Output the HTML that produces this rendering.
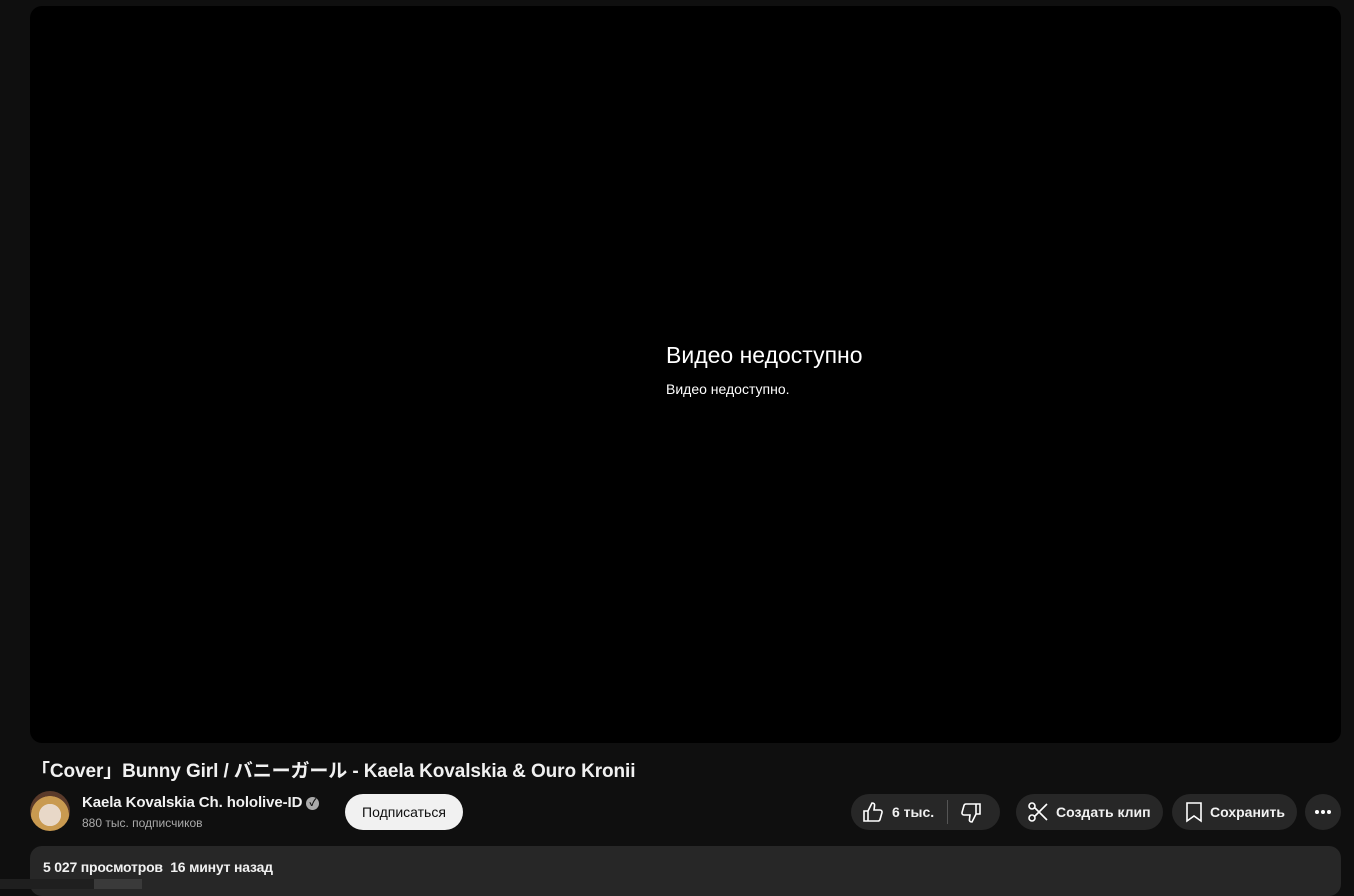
<!DOCTYPE html><html><head><meta charset="utf-8"><style>
body{margin:0;width:1354px;height:886px;background:#0f0f0f;overflow:hidden;font-family:"Liberation Sans","Noto Sans CJK JP",sans-serif;color:#f1f1f1;position:relative}
.a{position:absolute}
.btn{position:absolute;background:#272727;border-radius:18px;height:36px;top:794px;display:flex;align-items:center;font-size:14px;font-weight:bold}
</style></head><body>
<div class="a" style="left:30px;top:6px;width:1311px;height:737px;background:#000;border-radius:12px"></div>
<div class="a" style="left:666px;top:342px;font-size:23px;color:#fff">Видео недоступно</div>
<div class="a" style="left:666px;top:381px;font-size:14px;color:#fff">Видео недоступно.</div>
<div class="a" style="left:31px;top:756px;font-size:19px;letter-spacing:-0.1px;font-weight:bold;white-space:nowrap">「Cover」Bunny Girl / バニーガール - Kaela Kovalskia &amp; Ouro Kronii</div>
<div class="a" style="left:30px;top:791px;width:40px;height:40px;border-radius:50%;background:radial-gradient(circle at 50% 60%,#e8d8c8 0 35%,#c99a50 36% 60%,#5a3a2a 61%)"></div>
<div class="a" style="left:82px;top:794px;font-size:15px;letter-spacing:-0.1px;font-weight:bold;white-space:nowrap">Kaela Kovalskia Ch. hololive-ID <span style="display:inline-block;width:13px;height:13px;border-radius:50%;background:#aaa;color:#0f0f0f;font-size:10px;text-align:center;line-height:13px;vertical-align:1px">✓</span></div>
<div class="a" style="left:82px;top:816px;font-size:12px;color:#aaa">880 тыс. подписчиков</div>
<div class="btn" style="left:345px;width:118px;background:#f1f1f1;color:#0f0f0f;justify-content:center;font-weight:normal">Подписаться</div>
<div class="btn" style="left:851px;width:149px">
<svg class="a" style="left:10px;top:6px" width="24" height="24" viewBox="0 0 24 24" fill="none" stroke="#fff" stroke-width="1.6"><path d="M3 11h4v10H3zM7 11l4-8c2 0 3 1 2.5 3L13 10h6c1.5 0 2.3 1.3 2 2.5l-2 7c-.3 1-1 1.5-2 1.5H7"/></svg>
<span class="a" style="left:41px;top:10px">6 тыс.</span>
<div class="a" style="left:96px;top:6px;width:1px;height:24px;background:#555"></div>
<svg class="a" style="left:108px;top:7px" width="24" height="24" viewBox="0 0 24 24" fill="none" stroke="#fff" stroke-width="1.6"><path d="M17 3h4v10h-4zM17 13l-4 8c-2 0-3-1-2.5-3L11 14H5c-1.5 0-2.3-1.3-2-2.5l2-7C5.3 3.5 6 3 7 3h10"/></svg>
</div>
<div class="btn" style="left:1016px;width:147px">
<svg class="a" style="left:10px;top:6px" width="24" height="24" viewBox="0 0 24 24" fill="none" stroke="#fff" stroke-width="1.6"><circle cx="6" cy="6" r="3"/><circle cx="6" cy="18" r="3"/><path d="M8.5 7.5L21 20M8.5 16.5L21 4"/></svg>
<span class="a" style="left:40px;top:10px">Создать клип</span></div>
<div class="btn" style="left:1172px;width:125px">
<svg class="a" style="left:10px;top:6px" width="24" height="24" viewBox="0 0 24 24" fill="none" stroke="#fff" stroke-width="1.6"><path d="M5 3h14v18l-7-5-7 5z"/></svg>
<span class="a" style="left:38px;top:10px">Сохранить</span></div>
<div class="btn" style="left:1305px;width:36px;justify-content:center">
<svg width="18" height="6" viewBox="0 0 18 6" fill="#fff"><circle cx="3" cy="3" r="2"/><circle cx="9" cy="3" r="2"/><circle cx="15" cy="3" r="2"/></svg></div>
<div class="a" style="left:30px;top:846px;width:1311px;height:50px;background:#272727;border-radius:12px"></div>
<div class="a" style="left:43px;top:859px;font-size:14px;letter-spacing:-0.2px;font-weight:bold">5 027 просмотров&nbsp; 16 минут назад</div>
<div class="a" style="left:94px;top:879px;width:48px;height:10px;background:#3a3a3a"></div>
<div class="a" style="left:0;top:879px;width:94px;height:10px;background:#1f1f1f"></div>
</body></html>
